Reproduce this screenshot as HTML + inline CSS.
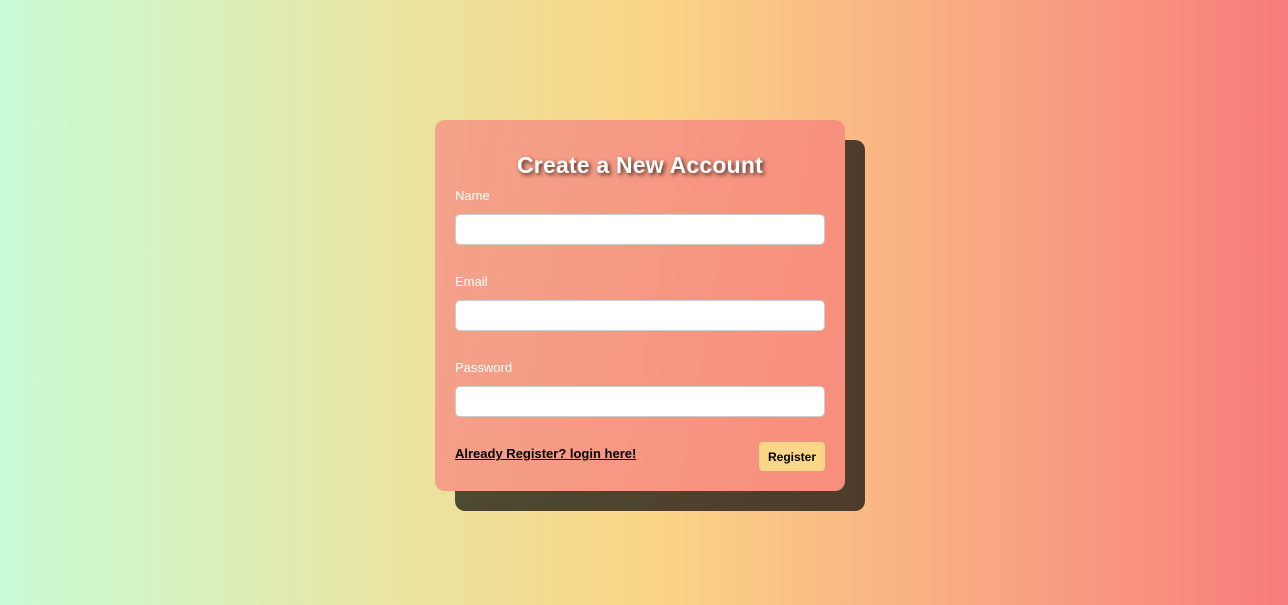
<!DOCTYPE html>
<html><head><style>
html,body{margin:0;padding:0}
body{width:1288px;height:605px;overflow:hidden;background:linear-gradient(90deg,#c8fcd6 0%,#e9e5a2 30%,#fad687 50%,#f9aa82 75%,#f77c7c 100%);font-family:"Liberation Sans",sans-serif;position:relative}
.sh{position:absolute;left:455px;top:140px;width:410px;height:371px;border-radius:10px;background:linear-gradient(90deg,#4c4a30,#4f3b2b)}
.card{position:absolute;left:435px;top:120px;width:410px;height:371px;border-radius:10px;background:linear-gradient(100deg,#f4a38a,#f88d7c)}
h1{position:absolute;top:152px;margin:0;text-align:center;color:#fff;font-size:23px;font-weight:bold;letter-spacing:0.2px;text-shadow:2px 2px 4px #4a2a20}
.l{position:absolute;left:455px;color:#fff;font-size:13px}
.i{position:absolute;left:455px;width:368px;height:29px;background:#fff;border:1px solid #ccc;border-radius:5px}
a{position:absolute;left:455px;top:446px;color:#000;font-size:13px;font-weight:bold;text-decoration:underline}
.b{position:absolute;left:759px;top:442px;width:66px;height:29px;background:#fad687;border-radius:4px;font-size:12px;font-weight:bold;line-height:31px;text-align:center}
</style></head><body>
<div class="sh"></div><div class="card"></div>
<h1 style="left:435px;width:410px">Create a New Account</h1>
<div class="l" style="top:188px">Name</div><div class="i" style="top:214px"></div>
<div class="l" style="top:274px">Email</div><div class="i" style="top:300px"></div>
<div class="l" style="top:360px">Password</div><div class="i" style="top:386px"></div>
<a>Already Register? login here!</a>
<div class="b">Register</div>
</body></html>
